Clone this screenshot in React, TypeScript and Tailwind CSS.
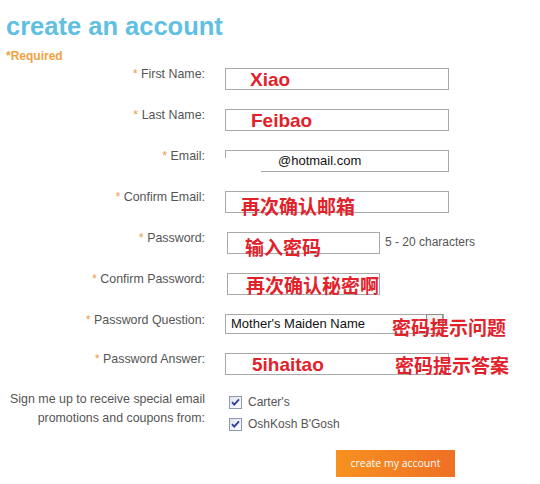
import React from 'react';

const red = 'absolute whitespace-nowrap font-bold text-[19px] leading-none text-[#e1222b]';

const Label: React.FC<{ text: string }> = ({ text }) => (
  <div className="w-[205px] shrink-0 -mt-px text-right text-[12.4px] leading-[14px] text-[#555]">
    <span className="text-[#e9a052]">*</span> {text}
  </div>
);

const Box: React.FC<{ w: string; ml?: string; children?: React.ReactNode }> = ({ w, ml = 'ml-[20px]', children }) => (
  <div className={`relative h-[22px] border border-[#a9a9a9] bg-white ${w} ${ml}`}>{children}</div>
);

const Check: React.FC<{ label: string }> = ({ label }) => (
  <div className="flex h-[22px] items-center">
    <svg width="13" height="13" viewBox="0 0 13 13" className="shrink-0">
      <defs>
        <linearGradient id="cb" x1="0" y1="0" x2="1" y2="1">
          <stop offset="0" stopColor="#dfe3ea" />
          <stop offset="1" stopColor="#ffffff" />
        </linearGradient>
      </defs>
      <rect x="0.5" y="0.5" width="12" height="12" fill="url(#cb)" stroke="#8a9bb3" />
      <path d="M3 6.2 L5.2 8.6 L10 3.4" fill="none" stroke="#2c3f9c" strokeWidth="1.8" />
    </svg>
    <span className="ml-[6px] text-[12px] text-[#555]">{label}</span>
  </div>
);

export default function App() {
  return (
    <div className="w-[540px] h-[484px] bg-white font-['Liberation_Sans','Noto_Sans_CJK_SC',sans-serif]">
      <h1 className="pl-[6px] pt-[11px] text-[25.5px] leading-[30px] font-bold text-[#5fc0e2]">create an account</h1>
      <p className="pl-[6px] mt-[8px] text-[12px] leading-[14px] font-bold text-[#f0a23e]">*Required</p>

      <div className="mt-[5px]">
        <div className="flex h-[41px] items-start">
          <Label text="First Name:" />
          <Box w="w-[224px]">
            <span className={`${red} left-[24px] top-[1px]`}>Xiao</span>
          </Box>
        </div>
        <div className="flex h-[41px] items-start">
          <Label text="Last Name:" />
          <Box w="w-[224px]">
            <span className={`${red} left-[25px] top-[1px]`}>Feibao</span>
          </Box>
        </div>
        <div className="flex h-[41px] items-start">
          <Label text="Email:" />
          <Box w="w-[224px]">
            <span className="absolute left-[52px] top-[2px] text-[13px] leading-[16px] text-[#111]">@hotmail.com</span>
            <span className="absolute -left-px top-[7px] -bottom-px w-[36px] bg-white" />
          </Box>
        </div>
        <div className="flex h-[41px] items-start">
          <Label text="Confirm Email:" />
          <Box w="w-[224px]">
            <span className={`${red} left-[15px] top-[6px]`}>再次确认邮箱</span>
          </Box>
        </div>
        <div className="flex h-[41px] items-start">
          <Label text="Password:" />
          <Box w="w-[153px]" ml="ml-[22px]">
            <span className={`${red} left-[17px] top-[6px]`}>输入密码</span>
          </Box>
          <span className="ml-[5px] mt-[3px] text-[12px] leading-[14px] text-[#555]">5 - 20 characters</span>
        </div>
        <div className="flex h-[41px] items-start">
          <Label text="Confirm Password:" />
          <Box w="w-[153px]" ml="ml-[22px]">
            <span className={`${red} left-[18px] top-[3px]`}>再次确认秘密啊</span>
          </Box>
        </div>
        <div className="flex h-[39px] items-start">
          <Label text="Password Question:" />
          <div className="relative ml-[20px] flex h-[20px] w-[219px] items-center border border-[#a9a9a9] bg-white">
            <span className="pl-[5px] text-[13px] leading-[16px] text-[#111]">Mother's Maiden Name</span>
            <span className="absolute right-0 -top-px flex h-[20px] w-[17px] items-center justify-center border border-[#8f8f8f] bg-[#f2f2f2]">
              <svg width="7" height="4" viewBox="0 0 7 4"><path d="M0 0 H7 L3.5 4 Z" fill="#111" /></svg>
            </span>
            <span className={`${red} left-[166px] top-[4px]`}>密码提示问题</span>
          </div>
        </div>
        <div className="flex h-[37px] items-start">
          <Label text="Password Answer:" />
          <Box w="w-[224px]">
            <span className={`${red} left-[26px] top-[1px]`}>5ihaitao</span>
            <span className={`${red} left-[169px] top-[3px]`}>密码提示答案</span>
          </Box>
        </div>
        <div className="flex items-start">
          <div className="w-[205px] shrink-0 text-right text-[12.4px] leading-[19px] text-[#555]">
            Sign me up to receive special email<br />promotions and coupons from:
          </div>
          <div className="ml-[24px] pt-[1px]">
            <Check label="Carter's" />
            <Check label="OshKosh B'Gosh" />
          </div>
        </div>
      </div>

      <button className="ml-[336px] mt-[15px] h-[27px] w-[119px] bg-linear-to-r from-[#f7911f] to-[#ef6f25] font-['Open_Sans',sans-serif] text-[10.5px] text-white">
        create my account
      </button>
    </div>
  );
}
